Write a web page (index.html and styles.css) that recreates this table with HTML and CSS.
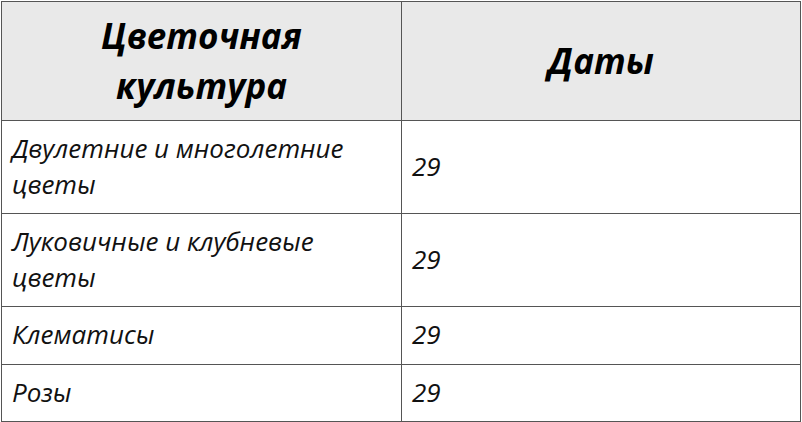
FILE: index.html
```html
<!DOCTYPE html>
<html lang="ru">
<head>
<meta charset="utf-8">
<link rel="stylesheet" href="styles.css">
</head>
<body>
<table class="dates">
  <colgroup><col class="c1"><col class="c2"></colgroup>
  <thead>
    <tr><th>Цветочная культура</th><th>Даты</th></tr>
  </thead>
  <tbody>
    <tr><td>Двулетние и многолетние цветы</td><td>29</td></tr>
    <tr><td>Луковичные и клубневые цветы</td><td>29</td></tr>
    <tr><td>Клематисы</td><td>29</td></tr>
    <tr><td>Розы</td><td>29</td></tr>
  </tbody>
</table>
</body>
</html>
```
FILE: styles.css
```css
html, body { margin: 0; padding: 0; background: #fff; }
.dates {
  border-collapse: collapse;
  width: 800px;
  margin: 1px;
  font-family: "Open Sans", "DejaVu Sans", sans-serif;
  font-style: italic;
  color: #111;
}
.c1 { width: 400px; }
.dates th, .dates td { border: 1px solid #555; }
.dates th {
  background: #e9e9e9;
  font-weight: 700;
  font-size: 35px;
  line-height: 50px;
  padding: 9px 60px 9px;
  text-align: center;
  color: #000;
}
.dates td {
  font-size: 26px;
  line-height: 35.5px;
  padding: 10px 10px 11px;
  text-align: left;
  vertical-align: middle;
}
```
